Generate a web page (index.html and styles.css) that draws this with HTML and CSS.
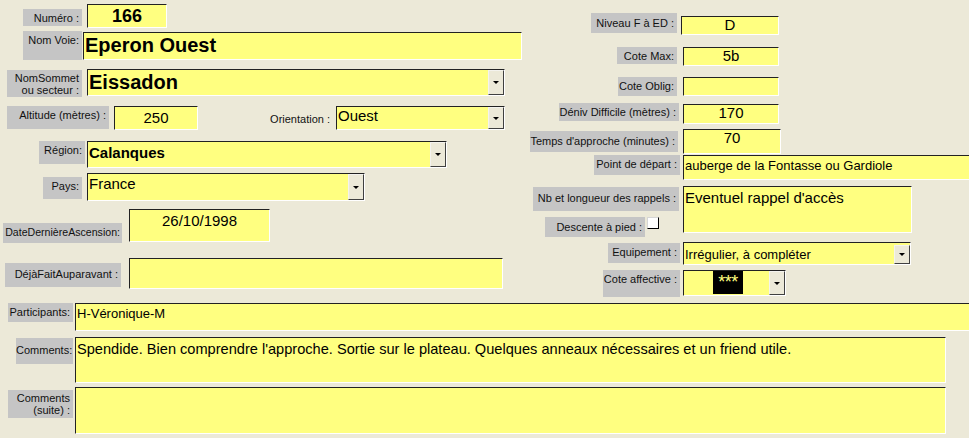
FILE: index.html
```html
<!DOCTYPE html>
<html>
<head>
  <meta charset="UTF-8">
  <title>Voies</title>
  <link rel="stylesheet" href="styles.css">
</head>
<body>
  <div class="form">
    <div class="top">
      <div class="col-left">
        <div class="row r-num">
          <div class="lbl l-num">Numéro :</div>
          <div class="fld f-num c">166</div>
        </div>
        <div class="row r-voie">
          <div class="lbl l-voie">Nom Voie:</div>
          <div class="fld f-voie">Eperon Ouest</div>
        </div>
        <div class="row r-sommet">
          <div class="lbl l-sommet">NomSommet<br>ou secteur :</div>
          <div class="fld combo f-sommet"><span class="val">Eissadon</span><span class="drop"></span></div>
        </div>
        <div class="row r-alt">
          <div class="lbl l-alt">Altitude (mètres) :</div>
          <div class="fld f-alt c">250</div>
          <div class="plain l-orient">Orientation :</div>
          <div class="fld combo f-orient"><span class="val">Ouest</span><span class="drop"></span></div>
        </div>
        <div class="row r-region">
          <div class="lbl l-region">Région:</div>
          <div class="fld combo f-region"><span class="val">Calanques</span><span class="drop"></span></div>
        </div>
        <div class="row r-pays">
          <div class="lbl l-pays">Pays:</div>
          <div class="fld combo f-pays"><span class="val">France</span><span class="drop"></span></div>
        </div>
        <div class="row r-date">
          <div class="lbl l-date">DateDernièreAscension:</div>
          <div class="fld f-date c">26/10/1998</div>
        </div>
        <div class="row r-deja">
          <div class="lbl l-deja">DéjàFaitAuparavant :</div>
          <div class="fld f-deja"></div>
        </div>
      </div>

      <div class="col-right">
        <div class="row r1">
          <div class="lbl l-niveau">Niveau F à ED :</div>
          <div class="fld f-niveau c">D</div>
        </div>
        <div class="row r2">
          <div class="lbl l-cmax">Cote Max:</div>
          <div class="fld f-short c">5b</div>
        </div>
        <div class="row r3">
          <div class="lbl l-coblig">Cote Oblig:</div>
          <div class="fld f-short"></div>
        </div>
        <div class="row r4">
          <div class="lbl l-deniv">Déniv Difficile (mètres) :</div>
          <div class="fld f-deniv c">170</div>
        </div>
        <div class="row r5">
          <div class="lbl l-temps">Temps d'approche (minutes) :</div>
          <div class="fld f-temps c">70</div>
        </div>
        <div class="row r6">
          <div class="lbl l-depart">Point de départ :</div>
          <div class="fld f-depart sm">auberge de la Fontasse ou Gardiole</div>
        </div>
        <div class="row r7">
          <div class="stack">
            <div class="lbl l-rappels">Nb et longueur des rappels :</div>
            <div class="row">
              <div class="lbl l-pied">Descente à pied :</div>
              <div class="check"></div>
            </div>
          </div>
          <div class="fld f-rappels">Eventuel rappel d'accès</div>
        </div>
        <div class="row r8">
          <div class="lbl l-equip">Equipement :</div>
          <div class="fld combo f-equip sm"><span class="val">Irrégulier, à compléter</span><span class="drop"></span></div>
        </div>
        <div class="row r9">
          <div class="lbl l-aff">Cote affective :</div>
          <div class="fld combo f-aff"><span class="val"><span class="sel">***</span></span><span class="drop"></span></div>
        </div>
      </div>
    </div>

    <div class="row r-part">
      <div class="lbl l-part">Participants:</div>
      <div class="fld f-part sm">H-Véronique-M</div>
    </div>
    <div class="row r-comm">
      <div class="lbl l-comm">Comments:</div>
      <div class="fld f-comm">Spendide. Bien comprendre l'approche. Sortie sur le plateau. Quelques anneaux nécessaires et un friend utile.</div>
    </div>
    <div class="row r-suite">
      <div class="lbl l-suite">Comments<br>(suite) :</div>
      <div class="fld f-suite"></div>
    </div>
  </div>
</body>
</html>
```

FILE: styles.css
```css
html, body {margin: 0; height: 100%;}
body {background: #ece9d8; font-family: "Liberation Sans", Arial, sans-serif; color: #000; overflow: hidden;}

.form {width: 969px; height: 438px; overflow: hidden;}
.top {display: flex;}
.col-left {width: 527px; flex: none;}
.col-right {flex: 1; min-width: 0;}
.row {display: flex; align-items: flex-start;}

/* labels */
.lbl {flex: none; box-sizing: border-box; background: #c5c5c5; color: #111; font-size: 11px; line-height: 12px; text-align: right; white-space: nowrap; padding: 3px 3px 0 0;}
.plain {flex: none; font-size: 11px; line-height: 12px; color: #111; text-align: right; white-space: nowrap;}

/* fields */
.fld {flex: none; box-sizing: border-box; background: #ffff80; border-top: 1px solid #222; border-left: 1px solid #222; border-right: 1px solid #fff; border-bottom: 1px solid #fff; font-size: 15px; line-height: 17px; padding: 1px 1px 0 1px; white-space: nowrap; overflow: hidden;}
.fld.c {text-align: center;}
.fld.sm {font-size: 13px; line-height: 16px; padding-top: 2px;}
.combo {display: flex; align-items: stretch; padding: 0;}
.combo .val {flex: 1; padding: 1px 0 0 1px; overflow: hidden;}
.drop {flex: none; width: 16px; box-sizing: border-box; background: #ece9d8; border-top: 1px solid #f4f3ee; border-left: 1px solid #f4f3ee; border-right: 1px solid #404040; border-bottom: 1px solid #404040; display: flex; align-items: center; justify-content: center;}
.drop::after {content: ""; border-left: 3px solid transparent; border-right: 3px solid transparent; border-top: 3px solid #000;}

/* left column */
.r-num {margin-top: 4px;}
.l-num {margin: 5px 0 0 23px; width: 59px; height: 17px;}
.f-num {margin-left: 5px; width: 80px; height: 24px; font-size: 18px; font-weight: bold; line-height: 21px;}

.r-voie {margin-top: 3px;}
.l-voie {margin-left: 23px; width: 59px; height: 29px;}
.f-voie {margin: 1px 0 0 1px; width: 439px; height: 28px; font-size: 20px; font-weight: bold; line-height: 23px;}

.r-sommet {margin-top: 9px;}
.l-sommet {margin: 1px 0 0 7px; width: 75px; height: 27px; padding-top: 2px;}
.f-sommet {margin-left: 5px; width: 418px; height: 27px; font-size: 20px; font-weight: bold; line-height: 23px;}

.r-alt {margin-top: 9px;}
.l-alt {margin-left: 7px; width: 102px; height: 23px;}
.f-alt {margin-left: 5px; width: 84px; height: 24px; padding-top: 2px;}
.l-orient {margin: 7px 0 0 62px; width: 70px;}
.f-orient {margin-left: 6px; width: 169px; height: 24px;}
.f-orient .val {padding-top: 0;}

.r-region {margin-top: 11px;}
.l-region {margin-left: 39px; width: 46px; height: 23px;}
.f-region {margin-left: 2px; width: 360px; height: 27px; font-weight: bold; padding-top: 0;}
.f-region .val {padding-top: 2px;}

.r-pays {margin-top: 5px;}
.l-pays {margin: 4px 0 0 43px; width: 39px; height: 22px;}
.f-pays {margin-left: 5px; width: 278px; height: 28px;}

.r-date {margin-top: 8px;}
.l-date {margin: 14px 0 0 3px; width: 119px; height: 20px; font-size: 10.6px; padding-right: 2px;}
.f-date {margin-left: 7px; width: 141px; height: 33px; padding-top: 2px;}

.r-deja {margin-top: 15px;}
.l-deja {margin: 5px 0 0 5px; width: 116px; height: 24px; padding-top: 5px;}
.f-deja {margin-left: 8px; width: 374px; height: 31px;}

/* right column */
.r1 {margin-top: 13px;}
.l-niveau {margin-left: 64px; width: 86px; height: 20px; padding-top: 4px;}
.f-niveau {margin: 3px 0 0 4px; width: 98px; height: 19px; line-height: 16px; padding-top: 0;}

.r2 {margin-top: 12px;}
.l-cmax {margin-left: 90px; width: 60px; height: 17px;}
.f-short {margin-left: 6px; width: 96px; height: 19px; line-height: 16px; padding-top: 0;}

.r3 {margin-top: 11px;}
.l-coblig {margin-left: 91px; width: 59px; height: 19px;}

.r4 {margin-top: 7px;}
.l-deniv {margin-left: 32px; width: 120px; height: 18px;}
.f-deniv {margin: 1px 0 0 4px; width: 96px; height: 20px; line-height: 16px; padding-top: 0;}

.r5 {margin-top: 5px;}
.l-temps {margin: 2px 0 0 3px; width: 148px; height: 21px; padding-top: 4px;}
.f-temps {margin-left: 5px; width: 98px; height: 25px; line-height: 16px; padding-top: 0;}

.r6 {margin-top: 1px;}
.l-depart {margin-left: 67px; width: 86px; height: 20px;}
.f-depart {margin-left: 3px; width: 300px; height: 25px;}

.r7 {margin-top: 6px;}
.stack {flex: none; margin-left: 6px; width: 147px;}
.l-rappels {margin-top: 1px; width: 146px; height: 24px; padding-top: 5px;}
.l-pied {margin: 6px 0 0 12px; width: 100px; height: 20px; padding-top: 4px;}
.check {flex: none; margin: 6px 0 0 2px; width: 12px; height: 12px; box-sizing: border-box; background: #fff; border-top: 1px solid #d6d6d6; border-left: 1px solid #d6d6d6; border-right: 1px solid #000; border-bottom: 1px solid #000;}
.f-rappels {margin-left: 3px; width: 229px; height: 47px; padding-top: 2px;}

.r8 {margin-top: 5px;}
.l-equip {margin: 1px 0 0 81px; width: 72px; height: 20px;}
.f-equip {margin-left: 3px; width: 228px; height: 23px;}
.f-equip .val {padding-top: 2px;}

.r9 {margin-top: 5px;}
.l-aff {margin-left: 76px; width: 77px; height: 27px;}
.f-aff {margin-left: 3px; width: 103px; height: 26px;}
.f-aff .val {padding: 0;}
.sel {display: block; margin-left: 29px; width: 30px; height: 23px; background: #000; color: #ffff80; font-size: 18px; line-height: 22px; text-align: center; letter-spacing: -0.5px;}

/* bottom */
.r-part {margin-top: 6px;}
.l-part {margin-left: 8px; width: 65px; height: 19px;}
.f-part {margin-left: 2px; width: 900px; height: 28px;}

.r-comm {margin-top: 6px;}
.l-comm {margin: 1px 0 0 16px; width: 57px; height: 26px; padding-top: 6px;}
.f-comm {margin-left: 2px; width: 871px; height: 46px; font-size: 14.6px; padding-top: 3px;}

.r-suite {margin-top: 4px;}
.l-suite {margin: 3px 0 0 8px; width: 65px; height: 28px; padding-top: 2px;}
.f-suite {margin-left: 2px; width: 871px; height: 47px;}
```
